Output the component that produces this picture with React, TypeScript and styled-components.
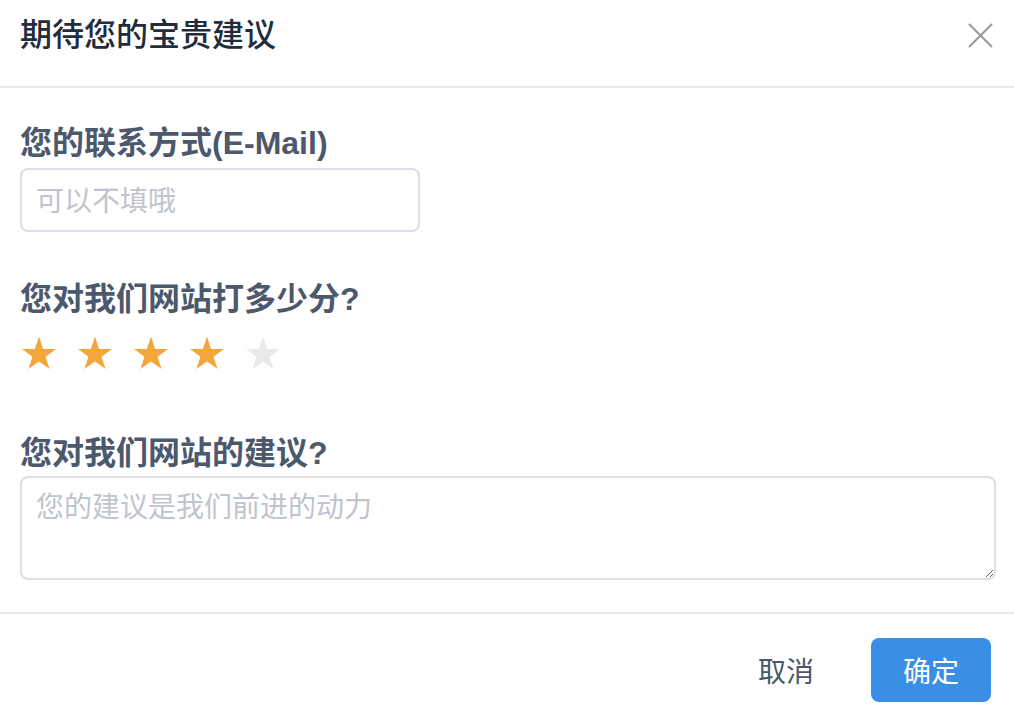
import React from 'react';
import styled, { createGlobalStyle } from 'styled-components';

const GlobalStyle = createGlobalStyle`
    html, body {
        margin: 0;
        padding: 0;
        background: #FFFFFF;
    }
    body {
        font-family: "Liberation Sans", "Noto Sans CJK SC", sans-serif;
    }
`

const Dialog = styled.div`
    width: 1014px;
    height: 716px;
    background: #FFFFFF;
    display: flex;
    flex-direction: column;
    box-sizing: border-box;
`

const Header = styled.div`
    display: flex;
    align-items: center;
    justify-content: space-between;
    padding: 14px 21px 30px 20px;
    border-bottom: 2px solid #E8E8E8;
`

const Title = styled.h2`
    margin: 0;
    font-size: 32px;
    line-height: 42px;
    font-weight: 500;
    color: #1F2D3D;
`

const CloseButton = styled.button`
    width: 25px;
    height: 25px;
    padding: 0;
    border: 0;
    background: none;
    cursor: pointer;
    display: flex;
`

const Body = styled.div`
    padding: 35px 18px 32px 20px;
    display: flex;
    flex-direction: column;
`

const Field = styled.div<{ $top?: number }>`
    display: flex;
    flex-direction: column;
    margin-top: ${p => p.$top || 0}px;
`

const Label = styled.label<{ $gap: number }>`
    font-size: 32px;
    line-height: 40px;
    font-weight: 700;
    color: #4C586B;
    margin-bottom: ${p => p.$gap}px;
`

const Input = styled.input`
    width: 400px;
    height: 64px;
    box-sizing: border-box;
    border: 2px solid #DCDFE6;
    border-radius: 8px;
    padding: 4px 14px 0;
    font-family: inherit;
    font-size: 28px;
    color: #1F2D3D;
    outline: none;

    &::placeholder {
        color: #C0C4CC;
    }
`

const TextArea = styled.textarea`
    width: 976px;
    height: 104px;
    box-sizing: border-box;
    border: 2px solid #DCDFE6;
    border-radius: 8px;
    padding: 10px 14px;
    font-family: inherit;
    font-size: 28px;
    line-height: 40px;
    color: #1F2D3D;
    outline: none;
    resize: vertical;

    &::placeholder {
        color: #C0C4CC;
    }
`

const Stars = styled.div`
    display: flex;
    gap: 20px;
    padding-left: 1px;
`

const StarIcon = styled.svg<{ $on: boolean }>`
    width: 36px;
    height: 36px;
    fill: ${p => (p.$on ? '#F5A63A' : '#E9E9E9')};
`

const Footer = styled.div`
    border-top: 2px solid #E8E8E8;
    padding: 24px 23px 0 0;
    display: flex;
    justify-content: flex-end;
    gap: 25px;
`

const Button = styled.button<{ $primary?: boolean }>`
    width: 120px;
    height: 64px;
    border: 0;
    border-radius: 8px;
    font-family: inherit;
    font-size: 28px;
    cursor: pointer;
    background: ${p => (p.$primary ? '#3A8EE6' : 'transparent')};
    color: ${p => (p.$primary ? '#FFFFFF' : '#48576A')};
`

const STAR_POINTS =
    '18,1.5 22.04,13.94 35.12,13.94 24.54,21.63 28.58,34.06 18,26.38 7.42,34.06 11.46,21.63 0.88,13.94 13.96,13.94'

const Star = ({ on }: { on: boolean }) => (
    <StarIcon $on={on} viewBox="0 0 36 36">
        <polygon points={STAR_POINTS} />
    </StarIcon>
)

const score = 4

const App = () => (
    <>
        <GlobalStyle />
        <Dialog>
            <Header>
                <Title>期待您的宝贵建议</Title>
                <CloseButton aria-label="关闭">
                    <svg width="25" height="25" viewBox="0 0 25 25">
                        <path d="M1 1 L24 24 M24 1 L1 24" stroke="#999999" strokeWidth="2" fill="none" />
                    </svg>
                </CloseButton>
            </Header>
            <Body>
                <Field>
                    <Label $gap={5}>您的联系方式(E-Mail)</Label>
                    <Input placeholder="可以不填哦" />
                </Field>
                <Field $top={47}>
                    <Label $gap={16}>您对我们网站打多少分?</Label>
                    <Stars>
                        {[1, 2, 3, 4, 5].map(i => (
                            <Star key={i} on={i <= score} />
                        ))}
                    </Stars>
                </Field>
                <Field $top={62}>
                    <Label $gap={3}>您对我们网站的建议?</Label>
                    <TextArea placeholder="您的建议是我们前进的动力" />
                </Field>
            </Body>
            <Footer>
                <Button>取消</Button>
                <Button $primary>确定</Button>
            </Footer>
        </Dialog>
    </>
)

export default App;
